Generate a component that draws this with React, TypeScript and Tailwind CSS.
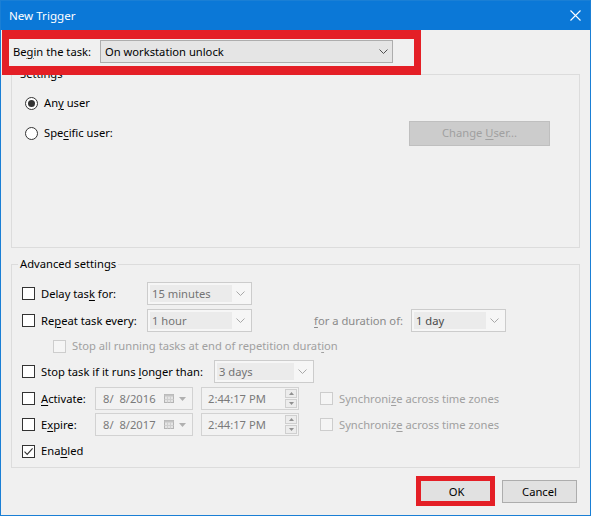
import React from 'react';

const U = ({ children }: { children: React.ReactNode }) => (
  <span className="underline underline-offset-[2px] decoration-1">{children}</span>
);

function Checkbox({ checked, disabled }: { checked?: boolean; disabled?: boolean }) {
  return (
    <span
      className={
        disabled
          ? 'w-[13px] h-[13px] shrink-0 border border-[#cdcdcd] bg-[#f5f5f5]'
          : 'w-[13px] h-[13px] shrink-0 border border-[#333333] bg-white flex items-center justify-center'
      }
    >
      {checked && (
        <svg width="11" height="11" viewBox="0 0 11 11">
          <path d="M1.5 5.6 L4.2 8.4 L9.6 2.4" fill="none" stroke="#333" strokeWidth="1.1" />
        </svg>
      )}
    </span>
  );
}

function Radio({ checked }: { checked?: boolean }) {
  return (
    <span className="w-[13px] h-[13px] shrink-0 rounded-full border border-[#333333] bg-white flex items-center justify-center">
      {checked && <span className="w-[7px] h-[7px] rounded-full bg-[#333333]" />}
    </span>
  );
}

function Chevron({ color }: { color: string }) {
  return (
    <svg width="9" height="5" viewBox="0 0 9 5">
      <path d="M0.5 0.5 L4.5 4.5 L8.5 0.5" fill="none" stroke={color} strokeWidth="1" />
    </svg>
  );
}

function DCombo({ value, w, dark }: { value: string; w: string; dark?: boolean }) {
  return (
    <div className={`h-[23px] shrink-0 border border-[#cccccc] bg-[#f6f6f6] flex p-[2px] ${w}`}>
      <span
        className={`flex-1 bg-[#ebebeb] pl-[2px] flex items-center whitespace-nowrap ${
          dark ? 'text-[#4a4a4a]' : 'text-[#737373]'
        }`}
      >
        {value}
      </span>
      <span className="w-[17px] flex items-center justify-center">
        <Chevron color="#a8a8a8" />
      </span>
    </div>
  );
}

function DatePick({ value }: { value: string }) {
  return (
    <div className="w-[98px] h-[23px] shrink-0 border border-[#d2d2d2] bg-[#f2f2f2] flex items-center pl-[7px] text-[#7a7a7a]">
      <span className="flex-1 whitespace-pre">{value}</span>
      <svg width="10" height="9" viewBox="0 0 10 9" className="mr-[5px]">
        <rect x="0.5" y="0.5" width="9" height="8" fill="#e4e4e4" stroke="#b4b4b4" />
        <rect x="0.5" y="0.5" width="9" height="2" fill="#c4c4c4" />
        <path d="M3.5 2.5 V8.5 M6.5 2.5 V8.5 M0.5 5.5 H9.5" stroke="#cfcfcf" strokeWidth="1" />
      </svg>
      <svg width="7" height="4" viewBox="0 0 7 4" className="mr-[6px]">
        <path d="M0 0 H7 L3.5 4 Z" fill="#b0b0b0" />
      </svg>
    </div>
  );
}

function TimePick({ value }: { value: string }) {
  return (
    <div className="w-[98px] h-[23px] shrink-0 border border-[#d2d2d2] bg-[#f2f2f2] flex items-center pl-[6px] text-[#7a7a7a]">
      <span className="flex-1 whitespace-nowrap">{value}</span>
      <div className="flex flex-col mr-[1px] gap-[1px]">
        <span className="w-[12px] h-[9px] border border-[#cfcfcf] bg-[#ececec] flex items-center justify-center">
          <svg width="5" height="3" viewBox="0 0 5 3">
            <path d="M0 3 H5 L2.5 0 Z" fill="#909090" />
          </svg>
        </span>
        <span className="w-[12px] h-[9px] border border-[#cfcfcf] bg-[#ececec] flex items-center justify-center">
          <svg width="5" height="3" viewBox="0 0 5 3">
            <path d="M0 0 H5 L2.5 3 Z" fill="#909090" />
          </svg>
        </span>
      </div>
    </div>
  );
}

export default function App() {
  return (
    <div className="relative w-[591px] h-[516px] border border-[#1a7fd5] bg-[#f0f0f0] flex flex-col font-['Noto_Sans',sans-serif] text-[11.2px] leading-[16px] text-black overflow-hidden whitespace-nowrap">
      {/* Title bar */}
      <div className="h-[29px] shrink-0 bg-[#0b78d7] flex items-center pl-[8px] pr-[9px] text-white text-[11.6px]">
        <span className="flex-1">New Trigger</span>
        <svg width="11" height="11" viewBox="0 0 11 11">
          <path d="M0.5 0.5 L10.5 10.5 M10.5 0.5 L0.5 10.5" stroke="white" strokeWidth="1.1" />
        </svg>
      </div>

      {/* Begin the task */}
      <div className="mt-[10px] pl-[12px] flex items-center h-[23px]">
        <span className="w-[87px]">
          Be<U>g</U>in the task:
        </span>
        <div className="w-[293px] h-[23px] border border-[#adadad] bg-[#e5e5e5] flex items-center pl-[4px] pr-[4px]">
          <span className="flex-1">On workstation unlock</span>
          <Chevron color="#505050" />
        </div>
      </div>

      {/* Settings */}
      <fieldset className="mt-[3px] mx-[10px] h-[182px] border border-[#dcdcdc]">
        <legend className="ml-[6px] px-[2px]">Settings</legend>
        <div className="pl-[13px] pr-[29px] flex flex-col">
          <div className="mt-[13px] h-[16px] flex items-center">
            <Radio checked />
            <span className="ml-[6px]">
              An<U>y</U> user
            </span>
          </div>
          <div className="mt-[9px] h-[26px] flex items-center">
            <Radio />
            <span className="ml-[6px] flex-1">
              Spe<U>c</U>ific user:
            </span>
            <div className="w-[141px] h-[25px] border border-[#bfbfbf] bg-[#cccccc] flex items-center justify-center text-[#a0a0a0]">
              <span>
                Change <U>U</U>ser...
              </span>
            </div>
          </div>
        </div>
      </fieldset>

      {/* Advanced settings */}
      <fieldset className="mt-[8px] mx-[10px] h-[212px] border border-[#dcdcdc]">
        <legend className="ml-[6px] px-[2px]">Advanced settings</legend>
        <div className="pl-[10px] flex flex-col">
          <div className="mt-[10px] h-[23px] flex items-center">
            <Checkbox />
            <span className="ml-[6px] w-[106px]">
              Delay tas<U>k</U> for:
            </span>
            <DCombo value="15 minutes" w="w-[105px]" />
          </div>
          <div className="mt-[4px] h-[23px] flex items-center">
            <Checkbox />
            <span className="ml-[6px] w-[106px]">
              Re<U>p</U>eat task every:
            </span>
            <DCombo value="1 hour" w="w-[105px]" />
            <span className="w-[159px] text-right pr-[8px] text-[#8a8a8a]">
              <U>f</U>or a duration of:
            </span>
            <DCombo value="1 day" w="w-[95px]" dark />
          </div>
          <div className="mt-[6px] h-[16px] flex items-center pl-[31px]">
            <Checkbox disabled />
            <span className="ml-[6px] text-[#a0a0a0]">
              Stop all running tasks at end of repetition durat<U>i</U>on
            </span>
          </div>
          <div className="mt-[6px] h-[23px] flex items-center">
            <Checkbox />
            <span className="ml-[6px] w-[173px]">
              Stop task if it runs <U>l</U>onger than:
            </span>
            <DCombo value="3 days" w="w-[100px]" />
          </div>
          <div className="mt-[4px] h-[23px] flex items-center">
            <Checkbox />
            <span className="ml-[6px] w-[54px]">
              <U>A</U>ctivate:
            </span>
            <DatePick value="8/  8/2016" />
            <span className="w-[8px]" />
            <TimePick value="2:44:17 PM" />
            <span className="w-[21px]" />
            <Checkbox disabled />
            <span className="ml-[6px] text-[#a0a0a0]">
              Synchroni<U>z</U>e across time zones
            </span>
          </div>
          <div className="mt-[3px] h-[23px] flex items-center">
            <Checkbox />
            <span className="ml-[6px] w-[54px]">
              E<U>x</U>pire:
            </span>
            <DatePick value="8/  8/2017" />
            <span className="w-[8px]" />
            <TimePick value="2:44:17 PM" />
            <span className="w-[21px]" />
            <Checkbox disabled />
            <span className="ml-[6px] text-[#a0a0a0]">
              Synchroniz<U>e</U> across time zones
            </span>
          </div>
          <div className="mt-[7px] h-[16px] flex items-center">
            <Checkbox checked />
            <span className="ml-[6px]">
              Ena<U>b</U>led
            </span>
          </div>
        </div>
      </fieldset>

      {/* Buttons */}
      <div className="mt-[12px] flex justify-end gap-[8px] pr-[13px]">
        <div className="w-[75px] h-[23px] border border-[#adadad] bg-[#e1e1e1] flex items-center justify-center">
          OK
        </div>
        <div className="w-[75px] h-[23px] border border-[#adadad] bg-[#e1e1e1] flex items-center justify-center">
          Cancel
        </div>
      </div>

      {/* Red highlight annotations */}
      <div className="absolute left-[1px] top-[29px] w-[419px] h-[45px] border-y-[9px] border-x-[7px] border-[#e41f26] pointer-events-none" />
      <div className="absolute left-[415px] top-[475px] w-[79px] h-[30px] border-[5px] border-[#e41f26] pointer-events-none" />
    </div>
  );
}
